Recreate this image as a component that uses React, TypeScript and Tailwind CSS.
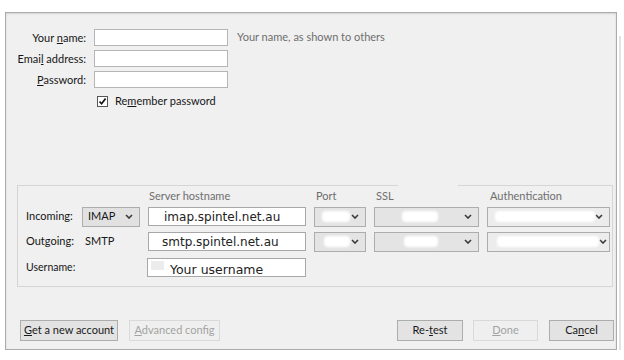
import React from 'react';

const Chevron = () => (
    <svg width="8" height="5" viewBox="0 0 8 5" className="shrink-0">
        <polyline points="1,1 4,4 7,1" fill="none" stroke="#3a3a3a" strokeWidth="1.6" />
    </svg>
);

// blurred select, the values are smudged out in the picture
const Select = ({ children, blob, bg = 'bg-[#e6e6e6]' }: { children?: React.ReactNode; blob?: string; bg?: string }) => (
    <div className={`h-[20px] w-full flex items-center border border-[#adadad] ${bg} pl-[5px] pr-[6px]`}>
        <div className="flex-1 flex items-center h-full">
            {children}
            {blob && <div className={`h-[11px] bg-white rounded-sm blur-[1px] ${blob}`}></div>}
        </div>
        <Chevron />
    </div>
);

const Btn = ({ children, disabled, w }: { children: React.ReactNode; disabled?: boolean; w: string }) => (
    <div
        className={`h-[21px] ${w} flex items-center justify-center text-[11px] border ${
            disabled ? 'border-[#d9d9d9] bg-[#efefef] text-[#a3a3a3]' : 'border-[#adadad] bg-[#e3e3e3] text-[#1a1a1a]'
        }`}
    >
        {children}
    </div>
);

export default function App() {
    return (
        <div className="w-[624px] h-[360px] bg-white overflow-hidden flex flex-row items-start pl-[5px] pt-[12px]" style={{ fontFamily: 'Lato, "Open Sans", sans-serif' }}>
            <div className="w-[612px] h-[338px] border border-[#ababab] bg-[#f0f0f0] shadow-[inset_0_1px_2px_rgba(0,0,0,0.12)] flex flex-col text-[11px] text-[#161616]">
                {/* account fields */}
                <div className="grid grid-cols-[80px_134px_auto] gap-x-2 gap-y-[4px] mt-[16px] items-center">
                    <div className="text-right leading-[17px]">Your <u>n</u>ame:</div>
                    <div className="h-[17px] bg-white border border-[#b5b5b5]"></div>
                    <div className="text-[#6e6e6e] ml-[1px]">Your name, as shown to others</div>

                    <div className="text-right leading-[17px]">Emai<u>l</u> address:</div>
                    <div className="h-[17px] bg-white border border-[#b5b5b5]"></div>
                    <div></div>

                    <div className="text-right leading-[17px]"><u>P</u>assword:</div>
                    <div className="h-[17px] bg-white border border-[#b5b5b5]"></div>
                    <div></div>
                </div>

                <div className="flex items-center ml-[91px] mt-[7px] h-[12px]">
                    <div className="w-[11px] h-[11px] border border-[#555] bg-white flex items-center justify-center">
                        <svg width="9" height="9" viewBox="0 0 9 9">
                            <polyline points="1.5,4.5 3.6,6.8 7.6,1.6" fill="none" stroke="#111" strokeWidth="1.7" />
                        </svg>
                    </div>
                    <span className="ml-[7px]">Re<u>m</u>ember password</span>
                </div>

                {/* server settings */}
                <div className="ml-[11px] mt-[78px] w-[596px] h-[102px] flex flex-col border-l border-r border-b border-[#d6d6d6]">
                    <div className="flex h-[1px]">
                        <div className="w-[380px] bg-[#d6d6d6]"></div>
                        <div className="w-[60px]"></div>
                        <div className="flex-1 bg-[#d6d6d6]"></div>
                    </div>
                    <div className="grid grid-cols-[48px_58px_158px_52px_105px_123px] gap-x-2 pl-[8px] items-center">
                        <div className="h-[14px] mt-[3px]"></div>
                        <div></div>
                        <div className="text-[#6e6e6e] mt-[3px] leading-[14px] ml-[1px]">Server hostname</div>
                        <div className="text-[#6e6e6e] mt-[3px] leading-[14px] ml-[2px]">Port</div>
                        <div className="text-[#6e6e6e] mt-[3px] leading-[14px] ml-[2px]">SSL</div>
                        <div className="text-[#6e6e6e] mt-[3px] leading-[14px] ml-[3px]">Authentication</div>

                        <div className="mt-[3px] h-[21px] flex items-center">Incoming:</div>
                        <div className="mt-[3px]">
                            <Select bg="bg-[#e1e1e1]"><span className="text-[11px]">IMAP</span></Select>
                        </div>
                        <div className="mt-[3px] h-[19px] bg-white border border-[#a8a8a8] pl-[15px] flex items-center text-[12px] text-[#222]" style={{ fontFamily: '"DejaVu Sans", Verdana, sans-serif' }}>imap.spintel.net.au</div>
                        <div className="mt-[3px]"><Select bg="bg-[#e4e4e4]" blob="w-[28px] ml-[2px]" /></div>
                        <div className="mt-[3px]"><Select bg="bg-[#e4e4e4]" blob="w-[36px] ml-[22px]" /></div>
                        <div className="mt-[3px]"><Select bg="bg-[#ececec]" blob="w-[100px] ml-[2px]" /></div>

                        <div className="mt-[4px] h-[21px] flex items-center">Outgoing:</div>
                        <div className="mt-[4px] pl-[3px]">SMTP</div>
                        <div className="mt-[4px] h-[19px] bg-white border border-[#a8a8a8] pl-[13px] flex items-center text-[12px] text-[#222]" style={{ fontFamily: '"DejaVu Sans", Verdana, sans-serif' }}>smtp.spintel.net.au</div>
                        <div className="mt-[4px]"><Select bg="bg-[#e4e4e4]" blob="w-[26px] ml-[4px]" /></div>
                        <div className="mt-[4px]"><Select bg="bg-[#e4e4e4]" blob="w-[34px] ml-[24px]" /></div>
                        <div className="mt-[4px]"><Select bg="bg-[#ececec]" blob="w-[102px] ml-[4px]" /></div>

                        <div className="mt-[6px] h-[19px] flex items-center text-[10.5px]">Username:</div>
                        <div className="mt-[6px]"></div>
                        <div className="mt-[6px] -ml-[1px] h-[19px] bg-white border border-[#a8a8a8] flex items-end text-[12.5px] text-[#222] leading-[14px]" style={{ fontFamily: '"DejaVu Sans", Verdana, sans-serif' }}>
                            <div className="w-[13px] h-[9px] bg-[#ececec] self-start mt-[2px] ml-[3px]"></div>
                            <span className="ml-[6px] mb-[-1px]">Your username</span>
                        </div>
                        <div></div>
                        <div></div>
                        <div></div>
                    </div>
                </div>

                {/* buttons */}
                <div className="flex items-center mt-[33px] pl-[14px] pr-[2px]">
                    <Btn w="w-[98px]"><u>G</u>et a new account</Btn>
                    <div className="ml-[11px]"><Btn w="w-[91px]" disabled><u>A</u>dvanced config</Btn></div>
                    <div className="flex-1"></div>
                    <Btn w="w-[66px]">Re-<u>t</u>est</Btn>
                    <div className="ml-[10px]"><Btn w="w-[65px]" disabled><u>D</u>one</Btn></div>
                    <div className="ml-[11px]"><Btn w="w-[65px]">Ca<u>n</u>cel</Btn></div>
                </div>
            </div>
            <div className="ml-[2px] mt-[24px] w-[2px] h-[314px] bg-[#e2e2e2]"></div>
        </div>
    );
}
